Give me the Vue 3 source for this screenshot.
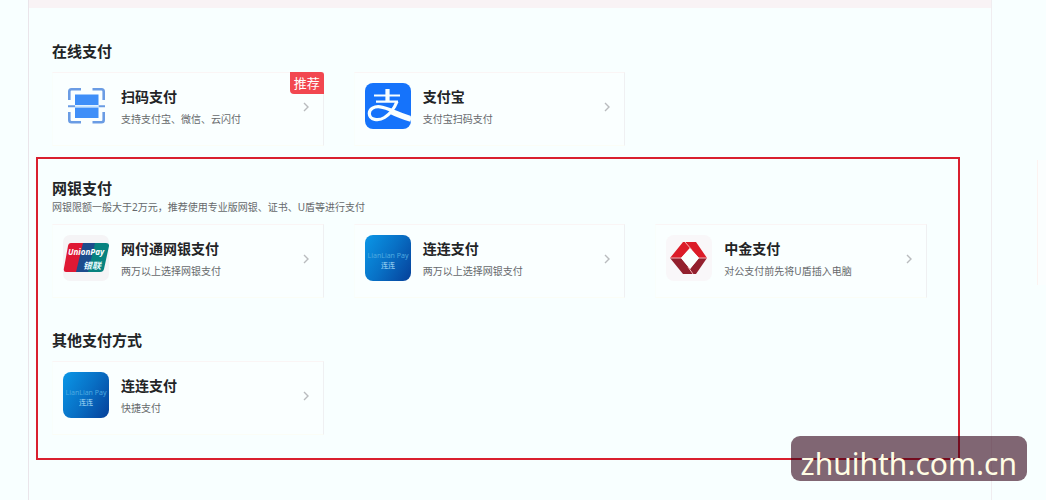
<template>
  <div class="page">
    <main class="panel">
      <div class="strip"></div>
      <section class="online">
        <h2>在线支付</h2>
        <div class="cards">
          <a v-for="item in online" :key="item.name" href="#" class="card">
            <span v-if="item.tag" class="tag">{{ item.tag }}</span>
            <svg v-if="item.icon === 'scan'" class="icon" viewBox="0 0 46 46">
              <g fill="none" stroke="#6a9ce4" stroke-width="2.6">
                <path d="M6.300 17V8.500Q6.300 6.300 8.500 6.300H18" />
                <path d="M29.500 6.300H38.500Q40.700 6.300 40.700 8.500V17" />
                <path d="M40.700 29V37Q40.700 39.200 38.500 39.200H29.500" />
                <path d="M18 39.200H8.500Q6.300 39.200 6.300 37V29" />
              </g>
              <path d="M12 11.500h23.500v10.500H12zM12 24.500h23.500v10.500H12z" fill="#3f8ff8" />
              <path d="M5 23.200h7M35.500 23.200h6.500" stroke="#6a9ce4" stroke-width="2" />
              <path d="M12 23.200H35.500" stroke="#b9dcff" stroke-width="1.200" />
            </svg>
            <svg v-else class="icon" viewBox="0 0 46 46">
              <rect width="46" height="46" rx="8" fill="#1573fb" />
              <g fill="none" stroke="#f8ffff">
                <path d="M9 12.500H35M11 18.700H33" stroke-width="2.200" />
                <path d="M22.500 6V18.500" stroke-width="4.200" />
                <path d="M32 18.500C29.500 25 25 31 19.500 34.500C13.500 38.300 4.500 37.200 4.300 30.500C4.200 25.500 9.500 23.200 15 23.800C23 24.700 30 29.500 45.500 34.500" stroke-width="3.200" />
                <path d="M26 29C32 32 38 34.200 46 36.500" stroke-width="4.500" />
              </g>
            </svg>
            <span class="info">
              <strong>{{ item.name }}</strong>
              <span class="desc">{{ item.desc }}</span>
            </span>
            <svg class="arrow" viewBox="0 0 6 10"><path d="M1 1l4 4-4 4" /></svg>
          </a>
        </div>
      </section>

      <div class="marked">
        <section v-for="group in groups" :key="group.title" class="group">
          <h2>{{ group.title }}</h2>
          <p v-if="group.note" class="note">{{ group.note }}</p>
          <div class="cards" :class="{ spaced: !group.note }">
            <a v-for="item in group.items" :key="item.name" href="#" class="card">
              <svg v-if="item.icon === 'union'" class="icon" viewBox="0 0 46 46">
                <rect width="46" height="46" rx="7" fill="#f5f4f6" />
                <path d="M8 8H24L17 37H3Q0 37 1 33L5 11Q5.500 8 8 8z" fill="#df1834" />
                <path d="M20 8H34L27 37H13z" fill="#1d4c8c" />
                <path d="M32 8H43Q46.500 8 46 11L41 34Q40.300 37 37 37H25z" fill="#07827f" />
                <text x="5" y="20" class="union-en">UnionPay</text>
                <text x="20" y="34" class="union-cn">银联</text>
              </svg>
              <svg v-else-if="item.icon === 'lian'" class="icon" viewBox="0 0 46 46">
                <defs>
                  <linearGradient :id="'lian-' + group.id" x1="0" y1="0.2" x2="1" y2="0.8">
                    <stop offset="0" stop-color="#0a91e2" />
                    <stop offset="0.5" stop-color="#0870c5" />
                    <stop offset="1" stop-color="#0647a0" />
                  </linearGradient>
                </defs>
                <rect width="46" height="46" rx="8" :fill="'url(#lian-' + group.id + ')'" />
                <text x="23" y="23" class="lian-en">LianLian Pay</text>
                <text x="23" y="33" class="lian-cn">连连</text>
              </svg>
              <svg v-else class="icon" viewBox="0 0 46 46">
                <rect width="46" height="46" rx="8" fill="#f9f7f9" />
                <path d="M17 7H30L41 23H33L24 13L15 23H4z" fill="#dc1c29" />
                <path d="M4 23H15L24 34L33 23H41L30 39H17z" fill="#93202e" />
                <path d="M24 13L33 23L24 34L15 23z" fill="#faffff" />
                <path d="M19 7L26 15M4 23H15M33 23H41M22 32L27 39" stroke="#f3b5b8" stroke-width="1" />
              </svg>
              <span class="info">
                <strong>{{ item.name }}</strong>
                <span class="desc">{{ item.desc }}</span>
              </span>
              <svg class="arrow" viewBox="0 0 6 10"><path d="M1 1l4 4-4 4" /></svg>
            </a>
          </div>
        </section>
      </div>
    </main>
    <aside class="side"></aside>
    <div class="watermark">zhuihth.com.cn</div>
  </div>
</template>

<script setup>
const online = [
  { name: '扫码支付', desc: '支持支付宝、微信、云闪付', icon: 'scan', tag: '推荐' },
  { name: '支付宝', desc: '支付宝扫码支付', icon: 'alipay' },
];

const groups = [
  {
    id: 'bank',
    title: '网银支付',
    note: '网银限额一般大于2万元，推荐使用专业版网银、证书、U盾等进行支付',
    items: [
      { name: '网付通网银支付', desc: '两万以上选择网银支付', icon: 'union' },
      { name: '连连支付', desc: '两万以上选择网银支付', icon: 'lian' },
      { name: '中金支付', desc: '对公支付前先将U盾插入电脑', icon: 'cpcn' },
    ],
  },
  {
    id: 'other',
    title: '其他支付方式',
    items: [{ name: '连连支付', desc: '快捷支付', icon: 'lian' }],
  },
];
</script>

<style>
body {
  background: #f8ffff;
}
</style>

<style scoped>
.page {
  position: relative;
  display: flex;
  min-height: 100vh;
  padding-left: 28px;
  box-sizing: border-box;
  background: #f8ffff;
  color: #222426;
  font-family: "Noto Sans", "Noto Sans CJK SC", sans-serif;
}

.panel {
  flex: 1;
  border-left: 1px solid #eae5ea;
  border-right: 1px solid #f0edf0;
}

.strip {
  height: 8px;
  background: #f9f3f5;
}

.online {
  padding: 32px 64px 11px 23px;
}

h2 {
  margin: 0;
  font-size: 15px;
  line-height: 22px;
  font-weight: 700;
}

.cards {
  display: grid;
  grid-template-columns: repeat(3, 1fr);
  gap: 30px;
}

.online .cards,
.cards.spaced {
  margin-top: 10px;
}

.card {
  position: relative;
  display: flex;
  align-items: flex-start;
  min-height: 74px;
  box-sizing: border-box;
  padding: 10px 14px 10px 10px;
  border: 1px solid #faf5f5;
  border-left-color: #f9fefb;
  border-right-color: #eff0f2;
  border-bottom-color: #fbfdf6;
  background: #faffff;
  color: inherit;
  text-decoration: none;
}

.icon {
  width: 46px;
  height: 46px;
  flex: none;
}

.info {
  display: flex;
  flex: 1;
  flex-direction: column;
  margin-left: 12px;
}

.info strong {
  font-size: 14px;
  line-height: 28px;
}

.desc,
.note {
  color: #66696c;
  font-size: 10px;
  line-height: 16px;
}

.note {
  margin: 0 0 9px;
}

.arrow {
  width: 6px;
  height: 10px;
  margin-top: 19px;
  fill: none;
  stroke: #b9bbbe;
  stroke-width: 1.4;
}

.tag {
  position: absolute;
  top: -1px;
  right: -1px;
  padding: 0 4px;
  border-radius: 0 3px 0 4px;
  background: #f24750;
  color: #fff;
  font-size: 13px;
  line-height: 22px;
}

.marked {
  margin: 0 31px 0 7px;
  padding: 18px 31px 23px 14px;
  border: 2px solid #d9202f;
}

.group + .group {
  margin-top: 31px;
}

.side {
  width: 8px;
  height: 125px;
  margin: 160px 0 0 45px;
  border-left: 1px solid #fcf3f1;
  background: #fbfefe;
}

.watermark {
  position: absolute;
  right: 19px;
  bottom: 19px;
  padding: 11px 10px 0;
  border-radius: 9px;
  background: rgba(48, 0, 22, 0.6);
  color: #fffde4;
  font-size: 30px;
  line-height: 34px;
}

.union-en {
  fill: #fff;
  font: italic 700 8px "Noto Sans", sans-serif;
}

.union-cn {
  fill: #e8fbff;
  font: italic 700 9px "Noto Sans CJK SC", sans-serif;
}

.lian-en {
  fill: #4eaae0;
  font-size: 7px;
  text-anchor: middle;
}

.lian-cn {
  fill: #a9daf5;
  font-size: 7px;
  text-anchor: middle;
}
</style>
